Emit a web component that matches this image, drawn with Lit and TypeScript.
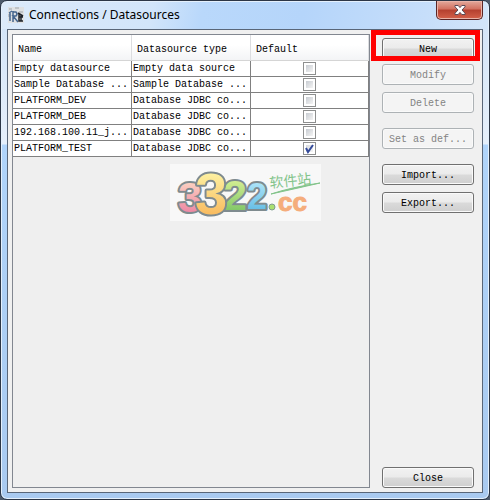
import { LitElement, html, css, svg } from "lit";
import { customElement, state } from "lit/decorators.js";

interface Source {
  name: string;
  type: string;
  isDefault: boolean;
}

@customElement("site-logo")
class SiteLogo extends LitElement {
  static styles = css`
    :host { display: block; background: #f8f8f8; }
    svg { display: block; overflow: visible; }
    .digit {
      font-family: "Liberation Sans", sans-serif;
      font-weight: 700;
      stroke: #7f8b8f;
      stroke-width: 4px;
      stroke-linejoin: round;
      paint-order: stroke;
    }
    .s { font-size: 36px; }
    .m { font-size: 43px; }
    .l { font-size: 58px; }
    .cc {
      font: 700 26px "Liberation Sans", sans-serif;
      fill: #f5ad7c;
      stroke: #f5ad7c;
      stroke-width: 1px;
    }
    .cn { font: 14px "Noto Sans CJK SC", sans-serif; fill: #83c48b; }
  `;
  render() {
    return html`<svg width="151" height="57" viewBox="0 0 151 57" role="img" aria-label="3322.cc">
      <defs>
        ${[["p", "#fbd0c0", "#ee8aa5"], ["y", "#fdf0a0", "#f9bd62"], ["g", "#d3ee92", "#85c96a"], ["b", "#a9e2f7", "#69bfe6"]].map(
          ([id, a, b]) => svg`<linearGradient id=${id} x1="0" y1="0" x2="0" y2="1"><stop offset="0.2" stop-color=${a}/><stop offset="0.8" stop-color=${b}/></linearGradient>`
        )}
      </defs>
      <text class="digit m" x="8" y="48" fill="url(#p)">3</text>
      <text class="digit s" x="77" y="45" fill="url(#b)">2</text>
      <text class="digit m" x="53" y="46" fill="url(#g)">2</text>
      <text class="digit l" x="25" y="50" fill="url(#y)">3</text>
      <circle cx="102" cy="43" r="3" fill="#a9e070" stroke="#7f9b8f" />
      <text class="cc" x="108" y="47">cc</text>
      <text class="cn" x="100" y="24" transform="rotate(-6 100 24)">软件站</text>
      <path d="M101 30Q122 23 150 19Q124 25 101 30Z" fill="#83c48b" stroke="#83c48b" />
    </svg>`;
  }
}

@customElement("app-root")
class AppRoot extends LitElement {
  @state() private sources: Source[] = [
    { name: "Empty datasource", type: "Empty data source", isDefault: false },
    { name: "Sample Database ...", type: "Sample Database ...", isDefault: false },
    { name: "PLATFORM_DEV", type: "Database JDBC co...", isDefault: false },
    { name: "PLATFORM_DEB", type: "Database JDBC co...", isDefault: false },
    { name: "192.168.100.11_j...", type: "Database JDBC co...", isDefault: false },
    { name: "PLATFORM_TEST", type: "Database JDBC co...", isDefault: true },
  ];

  static styles = css`
    :host {
      display: block;
      background: #4d5a6b;
      font: 10px/14px "Liberation Mono", monospace;
      color: #000;
    }
    * { box-sizing: border-box; }
    .window {
      display: flex;
      flex-direction: column;
      min-height: 100vh;
      padding: 0 6px 6px;
      border: 1px solid #2c3646;
      border-radius: 7px;
      box-shadow: inset 0 0 0 1px #e4f0fc;
      background:
        linear-gradient(100deg, #dceafa 0, #d2e5fa 150px, #b9d8fb 200px, #b5d5fa 300px, #c6defa 420px, #d3e5f9 100%) top / 100% 28px no-repeat,
        linear-gradient(#d0e3f8 0, #e6effa 143px, #b0d4fa 144px, #a9caf0 100%);
    }
    .titlebar { display: flex; height: 28px; align-items: flex-start; }
    .app-icon { flex: none; margin: 6px 5px 0 1px; }
    h1 {
      flex: 1;
      margin: 5px 0 0;
      font: 400 12px/18px "Noto Sans", sans-serif;
    }
    .close {
      width: 47px;
      height: 19px;
      padding: 0;
      display: grid;
      place-items: center;
      border: 1px solid #5b2525;
      border-top: 0;
      border-radius: 0 0 5px 5px;
      box-shadow: inset 0 0 0 1px #e9b3a8;
      background: linear-gradient(#e3a99c, #d2705f 45%, #b5402f 50%, #d4614a);
    }
    .client {
      flex: 1;
      display: flex;
      gap: 12px;
      padding: 4px 8px 4px 4px;
      border: 1px solid #596678;
      background: #f0f0f0;
    }
    .pane {
      position: relative;
      flex: 1;
      min-width: 0;
      border: 1px solid #828790;
      background: #efefef;
    }
    table {
      width: 100%;
      table-layout: fixed;
      border-collapse: separate;
      border-spacing: 0;
      background: #fff;
    }
    th, td { padding: 0 0 0 1px; text-align: left; font-weight: 400; white-space: nowrap; overflow: hidden; }
    th {
      height: 26px;
      padding: 4px 0 0 5px;
      border-right: 1px solid #dcdde0;
      border-bottom: 1px solid #d5d5d5;
      background: linear-gradient(#fff 40%, #f3f4f6);
    }
    td { height: 16px; padding-top: 1px; border-right: 1px solid #808080; border-bottom: 1px solid #808080; }
    .wide { width: 119px; }
    .check { padding: 0; text-align: center; }
    input {
      appearance: none;
      display: block;
      width: 13px;
      height: 13px;
      margin: 0 auto;
      border: 1px solid #8e8f8f;
      background: linear-gradient(135deg, #c8ccd2, #f4f4f4) content-box, #fff;
      padding: 2px;
    }
    input:checked {
      background:
        url("data:image/svg+xml,%3Csvg xmlns='http://www.w3.org/2000/svg' viewBox='0 0 11 11'%3E%3Cpath d='M2 5l2 4l5-7' fill='none' stroke='%23334a9a' stroke-width='2'/%3E%3C/svg%3E") border-box center / 11px no-repeat,
        linear-gradient(135deg, #d8dbe0, #f4f4f4) content-box, #fff;
    }
    .logo { position: absolute; left: 157px; top: 129px; }
    .actions { flex: none; width: 92px; display: flex; flex-direction: column; gap: 7px; padding-top: 4px; }
    .actions button {
      width: 100%;
      height: 21px;
      padding: 2px 0 0;
      border: 1px solid #707070;
      border-radius: 3px;
      box-shadow: inset 0 0 0 1px #fafafa;
      background: linear-gradient(#f2f2f2, #ebebeb 48%, #dadada 52%, #cfcfcf);
      font: inherit;
      color: #000;
    }
    .actions button:disabled { border-color: #adb2b5; background: #f4f4f4; color: #838383; }
    .apart { margin-top: 8px; }
    .actions .last { margin-top: auto; }
    .primary { position: relative; margin-bottom: -2px; height: 21px; }
    .primary::after {
      content: "";
      position: absolute;
      inset: -8px -6px -2px -11px;
      border: 5px solid #f00;
      pointer-events: none;
    }
  `;

  private choose(index: number) {
    this.sources = this.sources.map((s, i) => ({ ...s, isDefault: i === index }));
  }

  render() {
    return html`<main class="window">
      <header class="titlebar">
        <svg class="app-icon" width="16" height="16" viewBox="0 0 16 16" aria-hidden="true">
          <path fill="#dfe1e3" d="M0 0h16v16H0z" />
          <path fill="#bfc3c7" d="M1 1h3v2H1zM7 0h4v2H7zM11 4h4v2h-4zM0 7h2v3H0z" />
          <path d="M2 6v8M5 4v11M5 5h3q2 2 0 4H5l5 6M1 6l3-2" fill="none" stroke="#46668f" stroke-width="1.5" />
          <path d="M10 6l5 3M11 7v7h4M11 10h4M13 8v6" fill="none" stroke="#20242b" stroke-width="1.5" />
        </svg>
        <h1>Connections / Datasources</h1>
        <button class="close" aria-label="Close window">
          <svg width="12" height="10" viewBox="0 0 12 10" aria-hidden="true">
            <path d="M1 .5h3.2L6 2.6 7.800 .5H11v1.300L8 5l3 3.200v1.300H7.800L6 7.400 4.200 9.500H1V8.200L4 5 1 1.800z" fill="#fff" stroke="#5a4a56" />
          </svg>
        </button>
      </header>
      <section class="client">
        <div class="pane">
          <table>
            <thead>
              <tr><th class="wide">Name</th><th class="wide">Datasource type</th><th>Default</th></tr>
            </thead>
            <tbody>
              ${this.sources.map(
                (s, i) => html`<tr>
                  <td>${s.name}</td>
                  <td>${s.type}</td>
                  <td class="check">
                    <input type="checkbox" aria-label="Default: ${s.name}" .checked=${s.isDefault} @change=${() => this.choose(i)} />
                  </td>
                </tr>`
              )}
            </tbody>
          </table>
          <site-logo class="logo"></site-logo>
        </div>
        <nav class="actions" aria-label="Datasource actions">
          <div class="primary"><button>New</button></div>
          <button disabled>Modify</button>
          <button disabled>Delete</button>
          <button class="apart" disabled>Set as def...</button>
          <button class="apart">Import...</button>
          <button>Export...</button>
          <button class="last">Close</button>
        </nav>
      </section>
    </main>`;
  }
}
